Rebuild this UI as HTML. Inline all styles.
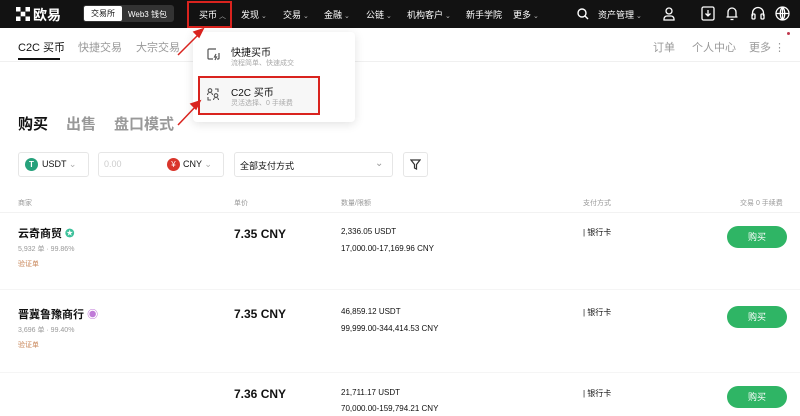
<!DOCTYPE html>
<html><head><meta charset="utf-8"><style>
*{margin:0;padding:0;box-sizing:border-box}
body{width:800px;height:416px;overflow:hidden;background:#fff;font-family:"Liberation Sans","Noto Sans CJK SC",sans-serif;color:#111;position:relative}
.a{position:absolute;white-space:nowrap}
.top{position:absolute;left:0;top:0;width:800px;height:28px;background:#121212}
.n{color:#fff;font-size:9px;top:8px}
.n i{font-style:normal;font-size:7px;color:#bbb;margin-left:2px}
.g{color:#999;font-size:10px}
.btn{position:absolute;left:727px;width:60px;height:22px;border-radius:11px;background:#2fb565;color:#fff;font-size:9px;text-align:center;line-height:22px}
.box{position:absolute;border:1px solid #e6e6e6;border-radius:3px;height:25px;top:152px}
svg{position:absolute}
</style></head><body>
<div class="top"></div>
<svg style="left:16px;top:7px" width="14" height="14" viewBox="0 0 14 14" fill="#fff"><rect x="0" y="0" width="4.5" height="4.5"/><rect x="9.5" y="0" width="4.5" height="4.5"/><rect x="4.7" y="4.7" width="4.6" height="4.6"/><rect x="0" y="9.5" width="4.5" height="4.5"/><rect x="9.5" y="9.5" width="4.5" height="4.5"/></svg>
<div class="a" style="left:33px;top:5px;color:#fff;font-size:14px;font-weight:bold">欧易</div>
<div class="a" style="left:83px;top:5px;width:91px;height:17px;background:#333;border-radius:3px"></div>
<div class="a" style="left:84px;top:6px;width:38px;height:15px;background:#fff;border-radius:2px;font-size:8px;text-align:center;line-height:15px">交易所</div>
<div class="a n" style="left:128px;top:9px;font-size:8px">Web3 钱包</div>
<div class="a" style="left:187px;top:1px;width:45px;height:27px;border:2px solid #d9231e"></div>
<div class="a n" style="left:199px">买币<i>︿</i></div>
<div class="a n" style="left:241px">发现<i>⌄</i></div>
<div class="a n" style="left:283px">交易<i>⌄</i></div>
<div class="a n" style="left:324px">金融<i>⌄</i></div>
<div class="a n" style="left:366px">公链<i>⌄</i></div>
<div class="a n" style="left:407px">机构客户<i>⌄</i></div>
<div class="a n" style="left:466px">新手学院</div>
<div class="a n" style="left:513px">更多<i>⌄</i></div>
<svg style="left:577px;top:8px" width="12" height="12" viewBox="0 0 12 12" fill="none" stroke="#fff" stroke-width="1.4"><circle cx="5" cy="5" r="4"/><path d="M8 8l3 3"/></svg>
<div class="a n" style="left:598px">资产管理<i>⌄</i></div>
<svg style="left:663px;top:7px" width="12" height="14" viewBox="0 0 12 14" fill="none" stroke="#fff" stroke-width="1.3"><circle cx="6" cy="4" r="3"/><path d="M1 13v-1a3 3 0 013-3h4a3 3 0 013 3v1z"/></svg>
<svg style="left:701px;top:6px" width="14" height="15" viewBox="0 0 14 15" fill="none" stroke="#fff" stroke-width="1.3"><rect x="1" y="1" width="12" height="13" rx="1.5"/><path d="M7 4v6M4.5 7.5L7 10l2.5-2.5"/></svg>
<svg style="left:726px;top:6px" width="12" height="15" viewBox="0 0 12 15" fill="none" stroke="#fff" stroke-width="1.3"><path d="M2 11V6a4 4 0 018 0v5z M0.5 11h11 M4.5 13.5h3"/></svg>
<svg style="left:751px;top:6px" width="14" height="15" viewBox="0 0 14 15" fill="none" stroke="#fff" stroke-width="1.3"><path d="M1.5 10V7a5.5 5.5 0 0111 0v3"/><rect x="1" y="8" width="3" height="5" rx="1"/><rect x="10" y="8" width="3" height="5" rx="1"/></svg>
<svg style="left:775px;top:6px" width="15" height="15" viewBox="0 0 15 15" fill="none" stroke="#fff" stroke-width="1.3"><circle cx="7.5" cy="7.5" r="6.5"/><path d="M1 7.5h13M7.5 1v13M7.5 1c-3 3-3 10 0 13M7.5 1c3 3 3 10 0 13"/></svg>
<div class="a" style="left:18px;top:39px;font-size:11px">C2C 买币</div>
<div class="a" style="left:18px;top:58px;width:42px;height:2px;background:#111"></div>
<div class="a g" style="left:78px;top:39px;font-size:11px">快捷交易</div>
<div class="a g" style="left:136px;top:39px;font-size:11px">大宗交易</div>
<div class="a g" style="left:653px;top:39px;font-size:11px">订单</div>
<div class="a g" style="left:692px;top:39px;font-size:11px">个人中心</div>
<div class="a g" style="left:749px;top:39px;font-size:11px">更多 ⋮</div>
<div class="a" style="left:787px;top:32px;width:3px;height:3px;border-radius:50%;background:#c0394f"></div>
<div class="a" style="left:0;top:61px;width:800px;height:1px;background:#f0f0f0"></div>
<div class="a" style="left:193px;top:32px;width:162px;height:90px;background:#fff;box-shadow:0 2px 10px rgba(0,0,0,.12);border-radius:4px"></div>
<svg style="left:207px;top:48px" width="13" height="13" viewBox="0 0 13 13" fill="none" stroke="#555" stroke-width="1.2"><path d="M9 1H2a1 1 0 00-1 1v8a1 1 0 001 1h4M12 5v5a1 1 0 01-1 1h-1"/><path d="M9 6l-1.5 3h2L8 12"/></svg>
<div class="a" style="left:231px;top:44px;font-size:10px">快捷买币</div>
<div class="a" style="left:231px;top:58px;font-size:7px;color:#aaa">流程简单、快速成交</div>
<div class="a" style="left:198px;top:76px;width:122px;height:39px;border:2px solid #d9231e;background:#f7f7f7"></div>
<svg style="left:207px;top:88px" width="12" height="13" viewBox="0 0 12 13" fill="none" stroke="#555" stroke-width="1.1"><circle cx="3" cy="2.5" r="1.8"/><path d="M0.5 7a2.5 2.5 0 015 0"/><circle cx="9" cy="7.5" r="1.8"/><path d="M6.5 12a2.5 2.5 0 015 0"/><path d="M8 1h3v3M1 9v3h3"/></svg>
<div class="a" style="left:231px;top:84px;font-size:10px">C2C 买币</div>
<div class="a" style="left:231px;top:98px;font-size:7px;color:#aaa">灵活选择、0 手续费</div>
<svg style="left:160px;top:25px" width="50" height="110" viewBox="0 0 50 110" fill="#d9231e" stroke="#d9231e" stroke-width="1.5"><path d="M18 30L40 8"/><path d="M43 4l-9 3 5 5z"/><path d="M18 100L37 80"/><path d="M40 76l-9 3 5 5z"/></svg>
<div class="a" style="left:18px;top:113px;font-size:15px;font-weight:bold">购买</div>
<div class="a" style="left:66px;top:113px;font-size:15px;font-weight:bold;color:#999">出售</div>
<div class="a" style="left:114px;top:113px;font-size:15px;font-weight:bold;color:#999">盘口模式</div>
<div class="box" style="left:18px;width:71px"></div>
<div class="a" style="left:25px;top:158px;width:13px;height:13px;border-radius:50%;background:#26a17b;color:#fff;font-size:8px;text-align:center;line-height:13px;font-weight:bold">T</div>
<div class="a" style="left:42px;top:159px;font-size:9px">USDT <span style="color:#aaa">⌄</span></div>
<div class="box" style="left:98px;width:126px"></div>
<div class="a g" style="left:104px;top:159px;font-size:9px;color:#ccc">0.00</div>
<div class="a" style="left:167px;top:158px;width:13px;height:13px;border-radius:50%;background:#d9352b;color:#fff;font-size:8px;text-align:center;line-height:13px">¥</div>
<div class="a" style="left:183px;top:159px;font-size:9px">CNY <span style="color:#aaa">⌄</span></div>
<div class="box" style="left:234px;width:159px"></div>
<div class="a" style="left:240px;top:159px;font-size:9px">全部支付方式</div>
<div class="a g" style="left:375px;top:158px">⌄</div>
<div class="box" style="left:403px;width:25px"></div>
<svg style="left:410px;top:159px" width="11" height="11" viewBox="0 0 11 11" fill="none" stroke="#333" stroke-width="1.2"><path d="M1 1h9L6.5 5.5V10L4.5 9V5.5z"/></svg>
<div class="a g" style="left:18px;top:198px;font-size:7px">商家</div>
<div class="a g" style="left:234px;top:198px;font-size:7px">单价</div>
<div class="a g" style="left:341px;top:198px;font-size:7px">数量/限额</div>
<div class="a g" style="left:583px;top:198px;font-size:7px">支付方式</div>
<div class="a g" style="left:740px;top:198px;font-size:7px">交易 0 手续费</div>
<div class="a" style="left:0;top:212px;width:800px;height:1px;background:#f2f2f2"></div>
<div class="a" style="left:18px;top:225px;font-size:11px;font-weight:bold">云奇商贸 <span style="color:#3cc09a">✪</span></div>
<div class="a g" style="left:18px;top:244px;font-size:7px">5,932 单 · 99.86%</div>
<div class="a" style="left:18px;top:259px;font-size:7px;color:#c9875a">验证单</div>
<div class="a" style="left:234px;top:227px;font-size:12px;font-weight:bold">7.35 CNY</div>
<div class="a" style="left:341px;top:227px;font-size:8px">2,336.05 USDT</div>
<div class="a" style="left:341px;top:244px;font-size:8px">17,000.00-17,169.96 CNY</div>
<div class="a" style="left:583px;top:227px;font-size:8px">| 银行卡</div>
<div class="btn" style="top:226px">购买</div>
<div class="a" style="left:0;top:289px;width:800px;height:1px;background:#f5f5f5"></div>
<div class="a" style="left:18px;top:306px;font-size:11px;font-weight:bold">晋冀鲁豫商行 <span style="color:#c07ad8">◉</span></div>
<div class="a g" style="left:18px;top:325px;font-size:7px">3,696 单 · 99.40%</div>
<div class="a" style="left:18px;top:340px;font-size:7px;color:#c9875a">验证单</div>
<div class="a" style="left:234px;top:307px;font-size:12px;font-weight:bold">7.35 CNY</div>
<div class="a" style="left:341px;top:307px;font-size:8px">46,859.12 USDT</div>
<div class="a" style="left:341px;top:324px;font-size:8px">99,999.00-344,414.53 CNY</div>
<div class="a" style="left:583px;top:307px;font-size:8px">| 银行卡</div>
<div class="btn" style="top:306px">购买</div>
<div class="a" style="left:0;top:372px;width:800px;height:1px;background:#f5f5f5"></div>
<div class="a" style="left:234px;top:387px;font-size:12px;font-weight:bold">7.36 CNY</div>
<div class="a" style="left:341px;top:388px;font-size:8px">21,711.17 USDT</div>
<div class="a" style="left:341px;top:404px;font-size:8px">70,000.00-159,794.21 CNY</div>
<div class="a" style="left:583px;top:388px;font-size:8px">| 银行卡</div>
<div class="btn" style="top:386px">购买</div>
</body></html>
